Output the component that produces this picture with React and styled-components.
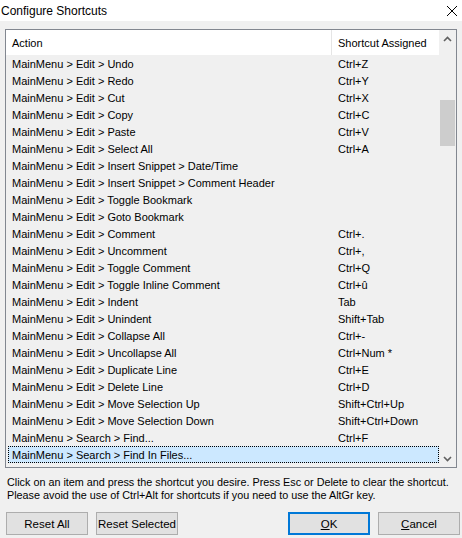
import styled, { createGlobalStyle } from 'styled-components'

const GlobalStyle = createGlobalStyle`
  html, body {
    margin: 0;
    padding: 0;
    background: #f0f0f0;
  }
  body {
    font-family: "Liberation Sans", Arial, sans-serif;
    font-size: 11px;
    color: #000;
  }
`

const Window = styled.div`
  width: 462px;
  height: 538px;
  background: #f0f0f0;
  display: flex;
  flex-direction: column;
  overflow: hidden;
`

const TitleBar = styled.div`
  flex-shrink: 0;
  height: 21px;
  background: #fff;
  display: flex;
  align-items: center;
  justify-content: space-between;
  padding: 0 4px 0 1px;
  font-size: 12px;
`

const Body = styled.div`
  flex-shrink: 0;
  padding: 8px 5px 0 5px;
  display: flex;
  flex-direction: column;
`

const ListBox = styled.div`
  flex-shrink: 0;
  height: 437px;
  border: 1px solid #828790;
  display: flex;
  background: #f0f0f0;
`

const ListContent = styled.div`
  flex: 1;
  overflow: hidden;
`

const Header = styled.div`
  display: flex;
  height: 25px;
  background: #fff;
`

const HeadCell = styled.div`
  width: ${p => p.width || 'auto'};
  flex: ${p => (p.width ? 'none' : 1)};
  display: flex;
  align-items: center;
  padding-left: 6px;
  box-sizing: border-box;
  border-right: ${p => (p.divider ? '1px solid #e5e5e5' : 'none')};
`

const Row = styled.div`
  display: flex;
  height: 17px;
  align-items: center;
  box-sizing: border-box;
  margin-left: ${p => (p.selected ? '2px' : '0')};
  background: ${p => (p.selected ? '#cce8ff' : 'transparent')};
  border: ${p => (p.selected ? '1px dotted #000' : 'none')};
`

const Cell = styled.div`
  width: ${p => p.width || 'auto'};
  flex: ${p => (p.width ? 'none' : 1)};
  padding-left: ${p => p.pad || '6px'};
  box-sizing: border-box;
  white-space: nowrap;
`

const ScrollBar = styled.div`
  width: 17px;
  display: flex;
  flex-direction: column;
  align-items: center;
  background: #f0f0f0;
`

const ArrowBox = styled.div`
  flex-shrink: 0;
  height: 17px;
  width: 17px;
  display: flex;
  align-items: center;
  justify-content: center;
`

const Track = styled.div`
  flex: 1;
  width: 15px;
  padding-top: 53px;
`

const Thumb = styled.div`
  height: 46px;
  background: #cdcdcd;
`

const Help = styled.div`
  margin-top: 8px;
  padding-left: 2px;
  line-height: 13px;
  font-size: 10.8px;
  white-space: nowrap;
`

const ButtonRow = styled.div`
  display: flex;
  align-items: center;
  margin-top: 10px;
  padding-left: 1px;
`

const Button = styled.button`
  flex-shrink: 0;
  width: 82px;
  height: 23px;
  margin-right: ${p => p.gap || '8px'};
  background: #e1e1e1;
  border: ${p => (p.primary ? '2px solid #0078d7' : '1px solid #adadad')};
  font-family: "Liberation Sans", Arial, sans-serif;
  font-size: 11.5px;
  white-space: nowrap;
  color: #000;
  padding: 0;
  box-sizing: border-box;
  u {
    text-decoration: underline;
  }
`

const rows = [
  ['MainMenu > Edit > Undo', 'Ctrl+Z'],
  ['MainMenu > Edit > Redo', 'Ctrl+Y'],
  ['MainMenu > Edit > Cut', 'Ctrl+X'],
  ['MainMenu > Edit > Copy', 'Ctrl+C'],
  ['MainMenu > Edit > Paste', 'Ctrl+V'],
  ['MainMenu > Edit > Select All', 'Ctrl+A'],
  ['MainMenu > Edit > Insert Snippet > Date/Time', ''],
  ['MainMenu > Edit > Insert Snippet > Comment Header', ''],
  ['MainMenu > Edit > Toggle Bookmark', ''],
  ['MainMenu > Edit > Goto Bookmark', ''],
  ['MainMenu > Edit > Comment', 'Ctrl+.'],
  ['MainMenu > Edit > Uncomment', 'Ctrl+,'],
  ['MainMenu > Edit > Toggle Comment', 'Ctrl+Q'],
  ['MainMenu > Edit > Toggle Inline Comment', 'Ctrl+û'],
  ['MainMenu > Edit > Indent', 'Tab'],
  ['MainMenu > Edit > Unindent', 'Shift+Tab'],
  ['MainMenu > Edit > Collapse All', 'Ctrl+-'],
  ['MainMenu > Edit > Uncollapse All', 'Ctrl+Num *'],
  ['MainMenu > Edit > Duplicate Line', 'Ctrl+E'],
  ['MainMenu > Edit > Delete Line', 'Ctrl+D'],
  ['MainMenu > Edit > Move Selection Up', 'Shift+Ctrl+Up'],
  ['MainMenu > Edit > Move Selection Down', 'Shift+Ctrl+Down'],
  ['MainMenu > Search > Find...', 'Ctrl+F'],
  ['MainMenu > Search > Find In Files...', ''],
]

function Chevron({ up }) {
  return (
    <svg width="9" height="6" viewBox="0 0 9 6">
      <path
        d={up ? 'M1 5 L4.5 1.5 L8 5' : 'M1 1 L4.5 4.5 L8 1'}
        fill="none"
        stroke="#606060"
        strokeWidth="1.6"
      />
    </svg>
  )
}

export default function App() {
  return (
    <Window>
      <GlobalStyle />
      <TitleBar>
        <span>Configure Shortcuts</span>
        <svg width="12" height="12" viewBox="0 0 12 12">
          <path d="M1 1 L11 11 M11 1 L1 11" stroke="#000" strokeWidth="1" />
        </svg>
      </TitleBar>
      <Body>
        <ListBox>
          <ListContent>
            <Header>
              <HeadCell width="326px" divider>Action</HeadCell>
              <HeadCell>Shortcut Assigned</HeadCell>
            </Header>
            {rows.map(([action, key], i) => {
              const selected = i === rows.length - 1
              return (
                <Row key={action} selected={selected}>
                  <Cell width={selected ? '324px' : '326px'} pad={selected ? '3px' : '6px'}>{action}</Cell>
                  <Cell>{key}</Cell>
                </Row>
              )
            })}
          </ListContent>
          <ScrollBar>
            <ArrowBox><Chevron up /></ArrowBox>
            <Track><Thumb /></Track>
            <ArrowBox><Chevron /></ArrowBox>
          </ScrollBar>
        </ListBox>
        <Help>
          Click on an item and press the shortcut you desire. Press Esc or Delete to clear the shortcut.
          <br />
          Please avoid the use of Ctrl+Alt for shortcuts if you need to use the AltGr key.
        </Help>
        <ButtonRow>
          <Button>Reset All</Button>
          <Button gap="110px">Reset Selected</Button>
          <Button primary><u>O</u>K</Button>
          <Button><u>C</u>ancel</Button>
        </ButtonRow>
      </Body>
    </Window>
  )
}
